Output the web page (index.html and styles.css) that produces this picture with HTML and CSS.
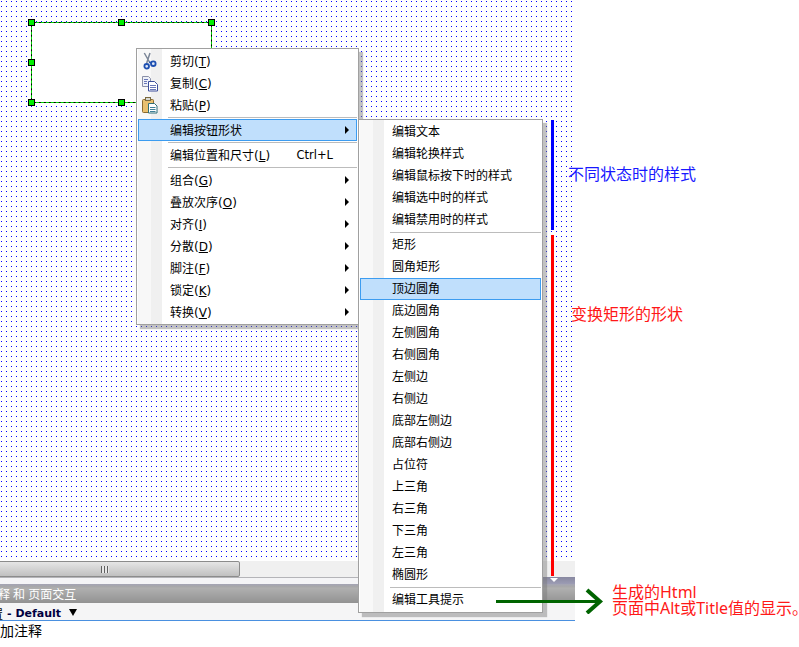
FILE: index.html
```html
<!DOCTYPE html>
<html lang="zh">
<head>
<meta charset="utf-8">
<title>编辑按钮形状</title>
<link rel="stylesheet" href="styles.css">
</head>
<body>
<div class="app">
  <div class="canvas"></div>
  <div class="hscroll">
    <div class="thumb"><span class="grip"></span></div>
  </div>
  <div class="strip"><div class="collapse"><span class="tri-down"></span></div></div>
  <div class="panel-head"><span class="panel-title">注释 和 页面交互</span></div>
  <div class="tab-bar"><span class="tab-cn">置</span><span class="tab-name">- Default</span><span class="tab-caret"></span></div>
  <div class="note-line"><span class="note-text">添加注释</span></div>
</div>

<div class="shape"><div class="shape-fill"></div></div>
<span class="handle h1"></span><span class="handle h2"></span><span class="handle h3"></span>
<span class="handle h4"></span><span class="handle h5"></span><span class="handle h6"></span>

<div class="menu main-menu">
  <div class="item"><svg class="ico" viewBox="0 0 18 18"><path d="M2.300 1L8 11M8 1L4.700 11" stroke="#7c8798" stroke-width="1.500" fill="none"/><circle cx="4.700" cy="14.300" r="2.300" fill="#dfe8f8" stroke="#1d4fb0" stroke-width="1.800"/><circle cx="11.300" cy="11.700" r="2.300" fill="#dfe8f8" stroke="#1d4fb0" stroke-width="1.800"/><path d="M7.300 10l2 1" stroke="#1d4fb0" stroke-width="1.500"/></svg><span class="label">剪切(<u>T</u>)</span></div>
  <div class="item"><svg class="ico" viewBox="0 0 18 18"><path d="M0.500 2.500h6l2 2v8h-8z" fill="#eef1f8" stroke="#8a90a8"/><path d="M6.500 7.500h6l3 3v6.500h-9z" fill="#fff" stroke="#3c4f9c"/><path d="M2 5.500h4M2 7.500h3M2 9.500h3M8 11.500h6M8 13.500h6M8 15.500h6" stroke="#6a78b8"/></svg><span class="label">复制(<u>C</u>)</span></div>
  <div class="item"><svg class="ico" viewBox="0 0 18 18"><rect x="0.500" y="3.500" width="11" height="13" rx="1" fill="#e8c070" stroke="#8a6a30"/><rect x="3.500" y="1.500" width="5" height="3" fill="#d8d8d0" stroke="#7a6a40"/><path d="M6.500 7.500h6l2.500 2.500v7h-8.500z" fill="#fff" stroke="#2f6f78"/><path d="M8 11.500h5.500M8 13.500h5.500M8 15.500h5.500" stroke="#3f7f98"/></svg><span class="label">粘贴(<u>P</u>)</span></div>
  <div class="sep"></div>
  <div class="item hot"><span class="spacer"></span><span class="label">编辑按钮形状</span><span class="arrow"></span></div>
  <div class="sep"></div>
  <div class="item"><span class="spacer"></span><span class="label">编辑位置和尺寸(<u>L</u>)</span><span class="shortcut">Ctrl+L</span></div>
  <div class="sep"></div>
  <div class="item"><span class="spacer"></span><span class="label">组合(<u>G</u>)</span><span class="arrow"></span></div>
  <div class="item"><span class="spacer"></span><span class="label">叠放次序(<u>O</u>)</span><span class="arrow"></span></div>
  <div class="item"><span class="spacer"></span><span class="label">对齐(<u>I</u>)</span><span class="arrow"></span></div>
  <div class="item"><span class="spacer"></span><span class="label">分散(<u>D</u>)</span><span class="arrow"></span></div>
  <div class="item"><span class="spacer"></span><span class="label">脚注(<u>F</u>)</span><span class="arrow"></span></div>
  <div class="item"><span class="spacer"></span><span class="label">锁定(<u>K</u>)</span><span class="arrow"></span></div>
  <div class="item"><span class="spacer"></span><span class="label">转换(<u>V</u>)</span><span class="arrow"></span></div>
</div>

<div class="menu sub-menu">
  <div class="item"><span class="label">编辑文本</span></div>
  <div class="item"><span class="label">编辑轮换样式</span></div>
  <div class="item"><span class="label">编辑鼠标按下时的样式</span></div>
  <div class="item"><span class="label">编辑选中时的样式</span></div>
  <div class="item"><span class="label">编辑禁用时的样式</span></div>
  <div class="sep"></div>
  <div class="item"><span class="label">矩形</span></div>
  <div class="item"><span class="label">圆角矩形</span></div>
  <div class="item hot"><span class="label">顶边圆角</span></div>
  <div class="item"><span class="label">底边圆角</span></div>
  <div class="item"><span class="label">左侧圆角</span></div>
  <div class="item"><span class="label">右侧圆角</span></div>
  <div class="item"><span class="label">左侧边</span></div>
  <div class="item"><span class="label">右侧边</span></div>
  <div class="item"><span class="label">底部左侧边</span></div>
  <div class="item"><span class="label">底部右侧边</span></div>
  <div class="item"><span class="label">占位符</span></div>
  <div class="item"><span class="label">上三角</span></div>
  <div class="item"><span class="label">右三角</span></div>
  <div class="item"><span class="label">下三角</span></div>
  <div class="item"><span class="label">左三角</span></div>
  <div class="item"><span class="label">椭圆形</span></div>
  <div class="sep"></div>
  <div class="item"><span class="label">编辑工具提示</span></div>
</div>

<div class="bar bar-blue"></div>
<div class="bar bar-red"></div>
<div class="note note-blue">不同状态时的样式</div>
<div class="note note-red">变换矩形的形状</div>
<svg class="green-arrow" viewBox="0 0 108 26" width="108" height="26"><path d="M0 13.500H104" stroke="#006400" stroke-width="3" fill="none"/><path d="M91 2l13 11.500L91 25" stroke="#006400" stroke-width="4" fill="none"/></svg>
<div class="note note-html">生成的Html<br>页面中Alt或Title值的显示。</div>
</body>
</html>
```
FILE: styles.css
```css
html, body { margin: 0; padding: 0; background: #fff; }
body {
  width: 799px;
  height: 647px;
  overflow: hidden;
  position: relative;
  font-family: "Noto Sans", "Noto Sans CJK SC", sans-serif;
  font-size: 12px;
  color: #000;
}
.app { width: 575px; height: 647px; display: flex; flex-direction: column; overflow: hidden; }
.canvas {
  height: 557px;
  margin-bottom: 4px;
  background-color: #0000ff;
  background-image:
    repeating-linear-gradient(90deg, transparent 0 1px, #fff 1px 5px),
    repeating-linear-gradient(180deg, transparent 0 1px, #fff 1px 5px);
  background-position: 1px 0, 0 1px;
  background-size: 5px 100%, 100% 5px;
}
.hscroll { height: 16px; background: #f0f0f0; display: flex; border-bottom: 1px solid #b4b4b8; }
.thumb {
  width: 240px;
  margin-left: -2px;
  height: 14px;
  border: 1px solid #8c8c8c;
  border-radius: 2px;
  background: linear-gradient(#e6e6e6, #c0c0c0);
  display: flex;
  justify-content: center;
  align-items: center;
}
.grip { width: 8px; height: 7px; background: repeating-linear-gradient(90deg, #606060 0 1px, #e8e8e8 1px 3px); margin-left: -28px; }
.strip { height: 6px; background: #f4f4f6; display: flex; justify-content: flex-end; }
.collapse {
  width: 32px;
  height: 7px;
  margin-top: -1px;
  background: linear-gradient(#8888a0, #9c9cb4);
  display: flex;
}
.tri-down { margin: 1px 0 0 7px; width: 0; height: 0; border-left: 4px solid transparent; border-right: 4px solid transparent; border-top: 4px solid #fff; }
.panel-head {
  height: 19px;
  background: linear-gradient(#a4a4b4 0, #a8a8a8 3px, #b0b0b0 4px, #929292 100%);
  color: #fff;
  line-height: 22px;
  overflow: hidden;
  white-space: nowrap;
  display: flex;
}
.panel-title { margin-left: -14px; }
.tab-bar {
  height: 13px;
  padding-top: 4px;
  background: #f5f5f6;
  border-bottom: 1px solid #4a90e0;
  display: flex;
  align-items: center;
  overflow: hidden;
  white-space: nowrap;
}
.tab-cn { margin-left: -9px; width: 16px; font-size: 12px; flex: none; }
.tab-name { font-family: "DejaVu Sans", sans-serif; font-weight: bold; font-size: 11px; color: #000040; }
.tab-caret { margin: 0 0 3px 8px; width: 0; height: 0; border-left: 4px solid transparent; border-right: 4px solid transparent; border-top: 7px solid #000; }
.note-line { font-size: 14px; line-height: 20px; overflow: hidden; white-space: nowrap; }
.note-text { display: block; margin-left: -14px; }

.shape { position: absolute; left: 31px; top: 22px; width: 181px; height: 81px; box-sizing: border-box; border: 1px dashed #00d800; background: #000; }
.shape-fill { width: 100%; height: 100%; background: #fff; }
.handle { position: absolute; width: 5px; height: 5px; background: #00f000; border: 1px solid #000; }
.h1 { left: 28px; top: 19px; }
.h2 { left: 118px; top: 19px; }
.h3 { left: 208px; top: 19px; }
.h4 { left: 28px; top: 59px; }
.h5 { left: 28px; top: 99px; }
.h6 { left: 118px; top: 99px; }

.menu {
  position: absolute;
  box-sizing: border-box;
  border: 1px solid #a0a0a0;
  padding: 1px;
  display: flex;
  flex-direction: column;
  box-shadow: 4px 4px 1px rgba(120, 120, 120, .45);
  background-color: #fff;
  background-repeat: no-repeat;
  background-image: linear-gradient(90deg, #fff 0 1px, #f8f8f8 1px 14px, #f0f0f0 14px 25px, #fff 25px);
  font-family: "DejaVu Sans", "Noto Sans CJK SC", sans-serif;
}
.main-menu { left: 136px; top: 48px; width: 223px; height: 277px; }
.sub-menu { left: 358px; top: 119px; width: 185px; height: 494px; }
.item { height: 22px; flex: none; display: flex; align-items: center; white-space: nowrap; box-sizing: border-box; }
.main-menu .item { padding-left: 4px; padding-right: 8px; }
.sub-menu .item { padding-left: 32px; }
.main-menu .label { margin-bottom: 2px; }
.sub-menu .label { margin-bottom: 4px; }
.hot { background: #c0dffc; outline: 1px solid #3c9cf0; outline-offset: -1px; }
.ico { width: 18px; height: 18px; flex: none; margin-right: 10px; }
.spacer { width: 28px; flex: none; }
.label { flex: none; }
.shortcut { margin-left: auto; margin-right: 16px; font-size: 11.500px; }
.arrow { margin-left: auto; width: 0; height: 0; border-left: 4px solid #000; border-top: 4px solid transparent; border-bottom: 4px solid transparent; }
.sep { flex: none; height: 3px; }
.sep::after { content: ""; display: block; height: 1px; background: #bcbcbc; margin: 1px 0 0 30px; }

.bar { position: absolute; left: 551px; width: 3px; }
.bar-blue { top: 120px; height: 110px; background: #0000ff; }
.bar-red { top: 235px; height: 341px; background: #ff0000; }
.note { position: absolute; font-size: 16px; line-height: 16px; white-space: nowrap; }
.note-blue { left: 568px; top: 166px; color: #1818ff; }
.note-red { left: 571px; top: 306px; color: #ff1818; }
.note-html { left: 612px; top: 584px; color: #ff1818; }
.green-arrow { position: absolute; left: 496px; top: 588px; }
```
